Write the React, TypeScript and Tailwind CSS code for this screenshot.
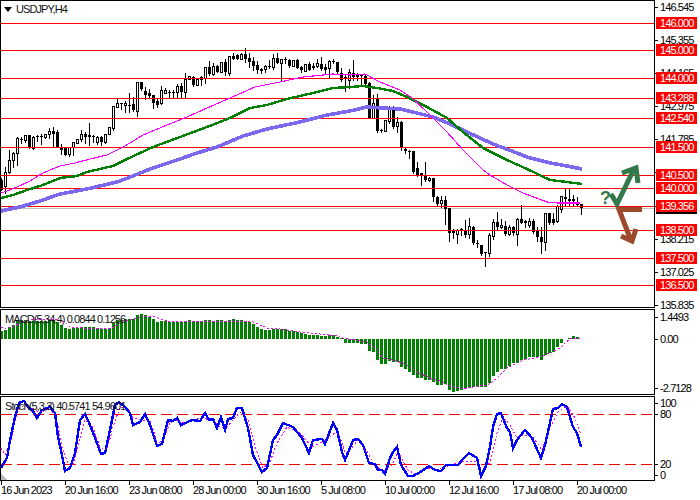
import React from "react";

type C = [number, number, number, number, number];
// kind (1 = white, 0 = black), high, low, body top, body bottom (page pixels)
const candles: C[] = [
[0,178,190,180,190],[1,167,193,172,186],[1,150,173,160,172],[1,152,167,153,160],[1,137,165,138,153],[0,137,143,139,140],
[1,135,142,135,140],[0,135,148,135,147],[1,136,149,137,148],[0,135,141,136,137],[0,134,144,136,137],[1,134,138,134,137],
[1,128,138,131,134],[0,127,146,131,134],[0,130,147,132,147],[0,144,154,147,150],[0,147,155,147,155],[1,147,156,147,154],
[1,142,155,142,147],[1,139,143,139,143],[1,130,141,134,139],[0,132,143,134,137],[0,123,145,135,137],[0,135,142,136,137],
[1,136,144,137,142],[0,136,145,137,142],[1,134,143,134,142],[1,127,134,127,134],[1,106,130,106,128],[1,99,107,103,107],
[0,103,109,103,104],[1,101,112,103,105],[0,93,112,105,106],[0,97,111,104,110],[1,82,116,82,111],[0,82,90,82,89],
[0,87,99,91,95],[0,89,98,93,96],[0,95,108,95,103],[0,98,107,101,105],[1,86,104,90,103],[1,88,93,90,93],
[0,90,97,92,93],[0,90,98,92,93],[1,84,98,86,92],[0,83,97,86,92],[1,73,98,79,92],[1,76,79,76,79],
[0,76,86,77,85],[1,79,85,79,85],[1,76,85,77,79],[1,67,83,67,78],[0,61,75,67,74],[1,63,75,66,74],
[0,65,72,66,72],[1,62,72,62,72],[0,59,75,62,72],[1,56,75,56,73],[0,53,59,56,59],[0,54,59,55,59],
[1,53,59,54,59],[0,48,62,54,59],[0,53,67,58,62],[0,57,70,61,66],[0,61,73,65,70],[0,68,73,69,71],
[1,65,72,66,69],[0,60,68,66,67],[1,54,69,58,67],[0,53,63,58,63],[1,59,80,59,63],[0,57,63,59,60],
[0,59,67,60,66],[1,60,66,60,66],[0,59,68,60,68],[0,66,72,67,70],[1,64,71,64,71],[0,62,70,64,70],
[0,63,69,66,68],[1,59,67,63,66],[0,57,70,64,69],[0,64,73,67,70],[1,60,77,61,68],[0,59,63,61,62],
[0,62,73,62,72],[0,68,81,73,80],[0,75,91,77,78],[1,69,88,72,80],[0,60,80,73,77],[0,73,80,75,77],
[0,74,85,75,76],[0,75,84,76,84],[0,82,118,83,118],[1,95,118,103,118],[0,94,132,98,131],[0,129,132,130,131],
[1,120,131,120,131],[1,106,123,107,121],[0,106,128,107,127],[1,117,132,122,126],[0,121,150,122,148],[0,148,153,149,151],
[0,150,158,151,152],[0,151,173,151,172],[0,162,176,168,175],[0,173,185,173,175],[0,162,181,176,180],[1,177,181,178,180],
[0,178,201,178,197],[0,196,205,197,204],[1,196,207,200,203],[0,196,224,200,209],[0,208,241,208,233],[0,229,238,231,233],
[1,229,243,230,234],[0,228,235,229,230],[0,220,237,230,235],[1,218,238,226,234],[0,226,244,227,243],[0,240,247,243,244],
[0,245,255,245,254],[0,252,266,252,253],[1,233,256,235,253],[1,219,239,222,236],[0,212,230,222,227],[1,219,228,225,227],
[0,221,235,226,234],[1,225,235,227,234],[0,226,235,227,233],[1,218,245,219,234],[0,205,223,219,223],[0,220,227,221,223],
[1,218,227,221,225],[0,219,233,221,232],[0,227,241,231,237],[0,227,253,237,242],[1,213,250,213,242],[0,213,224,213,223],
[0,213,224,219,223],[1,205,222,206,221],[1,196,212,196,209],[0,188,205,197,199],[0,189,205,199,201],[0,195,205,199,201],
[0,197,206,202,205],[0,204,214,204,208],
];

const priceLines = [23, 50, 78, 98, 118, 147, 175, 188, 206, 230, 258, 285];

const pts = (a: number[][]) => a.map((p) => p.join(",")).join(" ");

const magenta = [[1,193],[7,191],[17,187],[30,181],[43,173],[60,166],[75,163],[90,159],[107,155],[125,146],[143,135],[167,125],[187,117],[207,108],[230,98],[255,87],[280,82],[303,77],[333,74],[350,75],[365,74],[380,82],[400,90],[412,98],[427,112],[447,132],[463,150],[483,170],[490,175],[507,185],[523,193],[547,202],[557,203],[580,203]];
const green = [[1,198],[13,195],[27,190],[43,185],[60,178],[77,176],[87,172],[113,166],[127,159],[153,147],[180,137],[207,127],[230,118],[250,108],[267,105],[287,99],[313,93],[333,88],[350,87],[363,86],[377,88],[393,91],[407,97],[427,107],[447,118],[463,132],[483,148],[507,160],[527,169],[550,180],[567,182],[582,184]];
const blue = [[1,211],[10,209],[20,207],[40,201],[60,194],[87,189],[117,182],[133,176],[150,169],[177,160],[197,153],[217,147],[243,136],[267,129],[300,122],[327,115],[350,111],[367,107],[383,108],[400,109],[417,113],[433,117],[450,124],[467,132],[493,144],[517,153],[527,157],[550,163],[567,166],[582,169]];

// tops of the MACD bars, from the zoomed crops (300 + v / 3)
const macdTop = [92,90,82,75,60,60,60,62,62,62,63,62,60,60,65,75,85,87,85,85,82,82,82,82,85,86,88,85,68,60,60,57,57,57,45,43,45,50,57,65,63,63,65,66,67,67,64,60,63,63,64,61,61,62,60,60,64,60,58,60,60,62,65,72,82,88,90,90,88,87,87,87,93,93,95,100,102,104,104,106,108,107,105,105,110,115];
const macdNeg = [125,125,125,127,128,130,150,153,177,190,190,180,183,183,197,205,212,222,230,232,238,238,242,252,252,250,267,273,270,268,265,260,258,258,257,257,245,225,212,205,205,195,187,185,178,175,168,168,168,178,162,157,153,138,127];
const macdEnd = [116, 113, 108, 112, 116];

const signal = [[1,327],[5,329],[13,327],[20,323],[33,319],[57,320],[65,322],[70,327],[83,328],[97,328],[110,329],[117,325],[123,321],[137,318],[147,316],[153,316],[160,319],[170,322],[200,321],[227,321],[253,322],[260,325],[267,328],[280,329],[300,332],[320,334],[337,336],[343,338],[350,339],[367,342],[377,350],[383,358],[397,361],[407,365],[417,372],[430,378],[440,381],[450,386],[463,389],[473,387],[488,385],[497,378],[507,368],[523,360],[540,357],[557,350],[570,339],[582,338]];

const stoch = [[1,468],[7,458],[10,440],[15,417],[19,403],[24,401],[28,407],[33,411],[37,418],[42,410],[50,407],[55,413],[58,437],[62,455],[65,471],[70,468],[75,453],[80,420],[85,414],[90,425],[95,438],[101,454],[105,453],[110,430],[115,405],[119,402],[125,407],[130,413],[133,425],[140,422],[145,414],[150,425],[157,446],[162,444],[168,420],[173,421],[177,418],[181,425],[192,420],[200,421],[205,413],[209,420],[213,419],[217,428],[221,417],[225,430],[228,419],[233,418],[237,408],[242,408],[248,428],[253,455],[262,472],[267,468],[273,440],[277,435],[283,423],[293,427],[302,438],[309,453],[313,440],[322,439],[325,444],[333,423],[337,430],[342,452],[345,460],[350,448],[353,440],[358,439],[363,445],[369,463],[375,464],[378,470],[382,470],[385,474],[390,458],[393,452],[397,447],[401,465],[408,476],[413,476],[422,471],[429,466],[435,470],[441,471],[446,465],[458,465],[463,459],[469,453],[477,458],[481,476],[486,466],[490,447],[493,427],[497,414],[501,413],[507,428],[510,432],[513,448],[517,440],[525,430],[532,438],[541,458],[545,445],[553,409],[558,408],[562,404],[567,407],[573,427],[577,433],[581,447]];
const stochSig = [[1,448],[5,455],[12,437],[17,413],[20,408],[25,405],[32,408],[40,413],[50,408],[57,420],[62,447],[68,463],[73,465],[78,447],[85,420],[92,425],[100,447],[107,450],[113,427],[120,407],[128,408],[133,418],[143,420],[150,420],[158,445],[165,435],[170,423],[177,420],[183,423],[200,418],[213,420],[220,427],[227,427],[233,420],[240,412],[248,420],[255,447],[263,468],[270,462],[277,443],[287,427],[300,433],[312,447],[322,442],[330,437],[338,430],[345,453],[350,450],[358,440],[365,447],[373,463],[383,472],[392,465],[398,452],[408,470],[417,475],[428,468],[438,470],[450,465],[465,461],[477,462],[483,472],[490,462],[497,433],[503,417],[510,425],[517,438],[525,435],[533,437],[542,450],[550,428],[558,412],[567,406],[575,418],[581,435]];

const Tick = ({ label, className = "" }: { label?: string; className?: string }) => (
  <div className={`flex h-3 items-center gap-0.5 ${className}`}>
    <div className="h-px w-[3px] bg-black" />
    <span className="whitespace-nowrap">{label}</span>
  </div>
);

const scale = ["146.545", "145.355", "144.165", "142.975", "141.785", "", "", "138.215", "137.025", "135.835"];
const boxes = [[23,"146.000"],[50,"145.000"],[78,"144.000"],[98,"143.288"],[118,"142.540"],[147,"141.500"],[175,"140.500"],[188,"140.000"],[206,"139.356"],[230,"138.500"],[258,"137.500"],[285,"136.500"]] as [number,string][];
const dates = ["16 Jun 2023","20 Jun 16:00","23 Jun 08:00","28 Jun 00:00","30 Jun 16:00","5 Jul 08:00","10 Jul 00:00","12 Jul 16:00","17 Jul 08:00","20 Jul 00:00"];

export default function App() {
  return (
    <div className="flex h-[500px] w-[700px] flex-col overflow-hidden bg-white font-['Liberation_Sans',sans-serif] text-[11px] leading-none tracking-[-0.9px] text-black">
      {/* price panel */}
      <div className="flex h-[308px]">
        <div className="relative h-full w-[655px] border border-black">
          <svg className="block h-[306px] w-[653px]" viewBox="1 1 653 306" shapeRendering="crispEdges" fill="none">
            <line x1="1" x2="655" y1="208.5" y2="208.5" stroke="#c0c0c0" />
            {candles.map(([k, hi, lo, t, b], i) => {
              const x = 1 + 4 * i;
              return (
                <g key={i}>
                  <line x1={x + 0.5} x2={x + 0.5} y1={hi} y2={lo + 1} stroke="#000" />
                  {k ? (
                    <rect x={x - 0.5} y={t + 0.5} width={2} height={b - t} fill="#fff" stroke="#000" />
                  ) : (
                    <rect x={x - 1} y={t} width={3} height={Math.max(b - t, 1)} fill="#000" />
                  )}
                </g>
              );
            })}
            {priceLines.map((y) => (
              <line key={y} x1="1" x2="655" y1={y + 0.5} y2={y + 0.5} stroke="#ff0000" />
            ))}
            <polyline points={pts(blue)} stroke="#7b68ee" strokeWidth="3.6" />
            <polyline points={pts(green)} stroke="#008000" strokeWidth="2.4" />
            <polyline points={pts(magenta)} stroke="#ff00ff" strokeWidth="1.1" />
            <g shapeRendering="auto" strokeWidth="5" strokeLinejoin="miter">
              <polyline points="611,194 617,204 633,171" stroke="#32784a" />
              <polyline points="622,173 636,168 638,183" stroke="#32784a" />
              <polyline points="642,209.5 619,209.5 630,238" stroke="#9c4a2b" />
              <polyline points="636,229 632,241 621,236" stroke="#9c4a2b" />
            </g>
          </svg>
          <div className="absolute left-[3px] top-[6px] h-0 w-0 border-x-4 border-t-[5px] border-x-transparent border-t-black" />
          <div className="absolute left-[15px] top-[2px] flex h-3 items-center text-[#111]">USDJPY,H4</div>
          <div className="absolute left-[599px] top-[188px] text-[18px] font-bold tracking-normal text-[#32784a]">?</div>
        </div>
        <div className="relative h-full w-[45px]">
          <div className="flex flex-col gap-[21.2px] pt-px">
            {scale.map((l, i) => (
              <Tick key={i} label={l} />
            ))}
          </div>
          <div className="absolute left-px top-[211px] h-[3px] w-[41px] bg-black" />
          {boxes.map(([y, l]) => (
            <div key={y} className="absolute left-px flex h-3 w-[41px] items-center bg-[#ff0000] pl-1 text-white" style={{ top: y - 6 }}>
              {l}
            </div>
          ))}
        </div>
      </div>

      {/* MACD panel */}
      <div className="mt-px flex h-[86px]">
        <div className="relative h-full w-[655px] border border-black">
          <svg className="block h-[84px] w-[653px]" viewBox="1 310 653 84" shapeRendering="crispEdges" fill="none">
            {macdTop.map((v, i) => {
              const top = Math.round(300 + v / 3);
              return <rect key={i} x={4 * i} y={top} width={3} height={339 - top} fill="#008000" />;
            })}
            {macdNeg.map((v, i) => {
              const bottom = Math.round(300 + v / 3);
              return <rect key={i} x={4 * (i + 86)} y={339} width={3} height={bottom - 339 + 1} fill="#008000" />;
            })}
            {macdEnd.map((v, i) => {
              const top = Math.round(300 + v / 3);
              return <rect key={i} x={4 * (i + 141)} y={top} width={3} height={339 - top} fill="#008000" />;
            })}
            <polyline points={pts(signal)} stroke="#ff00ff" strokeWidth="1" strokeDasharray="2 2" />
          </svg>
          <div className="absolute left-[4px] top-[3px] flex h-3 items-center text-[#111]">MACD(5,34,4) 0.0844 0.1256</div>
        </div>
        <div className="flex w-[45px] flex-col">
          <Tick label="1.4493" className="mt-[2px]" />
          <Tick label="0.00" className="mt-[10px]" />
          <Tick label="-2.7128" className="mt-[37px]" />
        </div>
      </div>

      {/* stochastic panel */}
      <div className="mt-px flex h-[85px]">
        <div className="relative h-full w-[655px] border border-black">
          <svg className="block h-[83px] w-[653px]" viewBox="1 397 653 83" shapeRendering="crispEdges" fill="none">
            <g stroke="#ff0000" strokeWidth="1">
              <line x1="1" x2="655" y1="414.5" y2="414.5" strokeDasharray="11 5" />
              <line x1="1" x2="655" y1="464.5" y2="464.5" strokeDasharray="11 5" />
            </g>
            <polyline points={pts(stochSig)} stroke="#ff00ff" strokeWidth="1" strokeDasharray="2 2" />
            <polyline points={pts(stoch)} stroke="#0000ff" strokeWidth="2.4" />
            <polygon points="1,474 7,480 1,480" fill="#bdbdbd" />
          </svg>
          <div className="absolute left-[4px] top-[3px] flex h-3 items-center text-[#111]">Stoch(5,3,3) 40.5741 54.9601</div>
        </div>
        <div className="flex w-[45px] flex-col">
          <Tick label="100" className="mt-px" />
          <Tick label="80" className="mt-[-1px]" />
          <Tick label="20" className="mt-[38px]" />
          <Tick label="0" className="mt-[-1px]" />
        </div>
      </div>

      {/* time axis */}
      <div className="grid h-[19px] grid-cols-[repeat(10,64px)] pl-px">
        {dates.map((l) => (
          <div key={l} className="flex flex-col">
            <div className="h-1 w-px bg-black" />
            <span className="-mt-px flex h-3 items-center whitespace-nowrap">{l}</span>
          </div>
        ))}
      </div>
    </div>
  );
}
